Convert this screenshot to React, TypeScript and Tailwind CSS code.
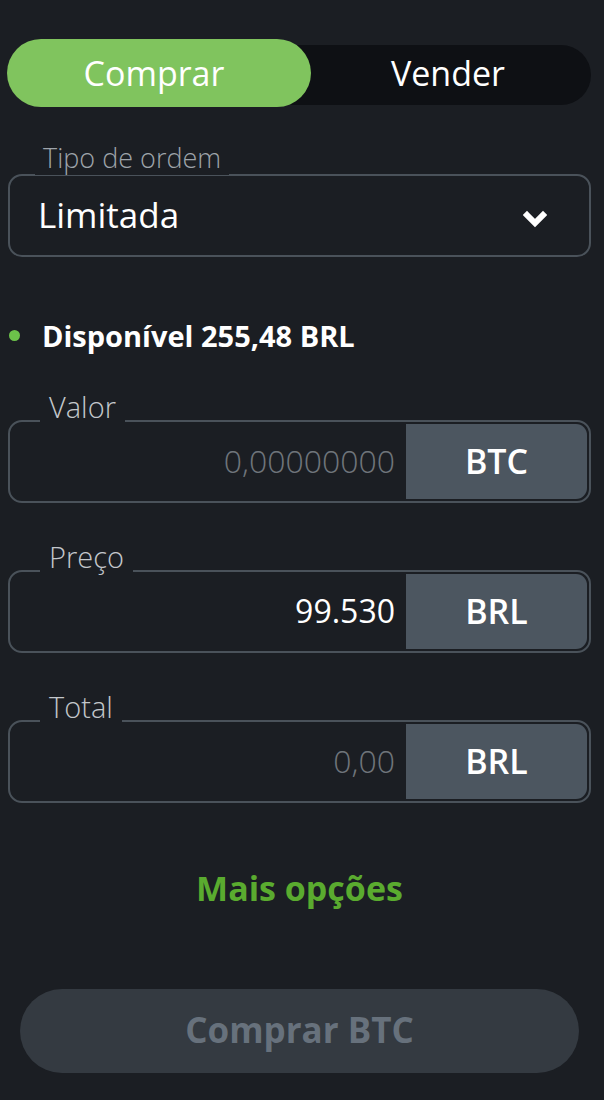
const font = { fontFamily: '"Open Sans", "Noto Sans", sans-serif' };

type FieldProps = {
  label: string;
  value: string;
  unit: string;
  filled?: boolean;
};

const AmountField = ({ label, value, unit, filled }: FieldProps) => (
  <div className="relative h-[83px] rounded-[14px] border-2 border-[#4a525a] p-[2px] flex">
    <span className="absolute -top-[32px] left-[30px] bg-[#1b1e23] px-[9px] text-[29px] font-light leading-[34px] text-[#c3c7cb]">
      {label}
    </span>
    <div
      className={
        filled
          ? "flex-1 flex items-center justify-end pr-[11px] text-[32px] font-medium text-white"
          : "flex-1 flex items-center justify-end pr-[11px] text-[32px] font-light text-[#6f757b]"
      }
    >
      {value}
    </div>
    <div className="w-[181px] rounded-r-[11px] bg-[#4c5660] flex items-center justify-center text-[34px] font-semibold text-white">
      {unit}
    </div>
  </div>
);

export default function App() {
  return (
    <div className="min-h-screen w-full bg-[#1b1e23] pl-2 pr-[13px] pt-[39px]" style={font}>
      {/* Buy / sell toggle */}
      <div className="relative h-[68px]">
        <div className="absolute left-0 right-0 top-[6px] h-[60px] rounded-full bg-[#0e1014]" />
        <div className="relative flex h-full">
          <button className="w-[304px] -ml-[1px] rounded-full bg-[#80c45e] pr-[10px] text-[34px] font-medium text-white">
            Comprar
          </button>
          <button className="flex-1 pr-[6px] text-[34px] font-medium text-white">Vender</button>
        </div>
      </div>

      {/* Order type */}
      <div className="relative mt-[67px] h-[83px] rounded-[14px] border-2 border-[#4a525a] flex items-center pl-[28px] pr-[42px]">
        <span className="absolute -top-[35px] left-[25px] bg-[#1b1e23] px-2 text-[27px] font-light leading-[34px] text-[#9ea4aa]">
          Tipo de ordem
        </span>
        <span className="flex-1 text-[35px] text-white">Limitada</span>
        <svg width="24" height="18" viewBox="0 0 24 18" className="mt-[6px]">
          <polyline
            points="4,5 12,13 20,5"
            fill="none"
            stroke="white"
            strokeWidth="6"
            strokeLinecap="square"
            strokeLinejoin="miter"
          />
        </svg>
      </div>

      {/* Available balance */}
      <div className="mt-[57px] flex items-center gap-[22px] pl-[1px]">
        <span className="h-[11px] w-[11px] rounded-full bg-[#6cc24a]" />
        <span className="text-[29px] font-bold text-white">Disponível 255,48 BRL</span>
      </div>

      <div className="mt-[62px] flex flex-col gap-[67px]">
        <AmountField label="Valor" value="0,00000000" unit="BTC" />
        <AmountField label="Preço" value="99.530" unit="BRL" filled />
        <AmountField label="Total" value="0,00" unit="BRL" />
      </div>

      <div className="mt-[60px] text-center text-[34px] font-bold text-[#5aab2f]">Mais opções</div>

      <div className="px-3 pt-[75px] pb-[27px]">
        <button className="h-[84px] w-full rounded-full bg-[#343a41] text-[35px] font-bold text-[#67717c]">
          Comprar BTC
        </button>
      </div>
    </div>
  );
}
